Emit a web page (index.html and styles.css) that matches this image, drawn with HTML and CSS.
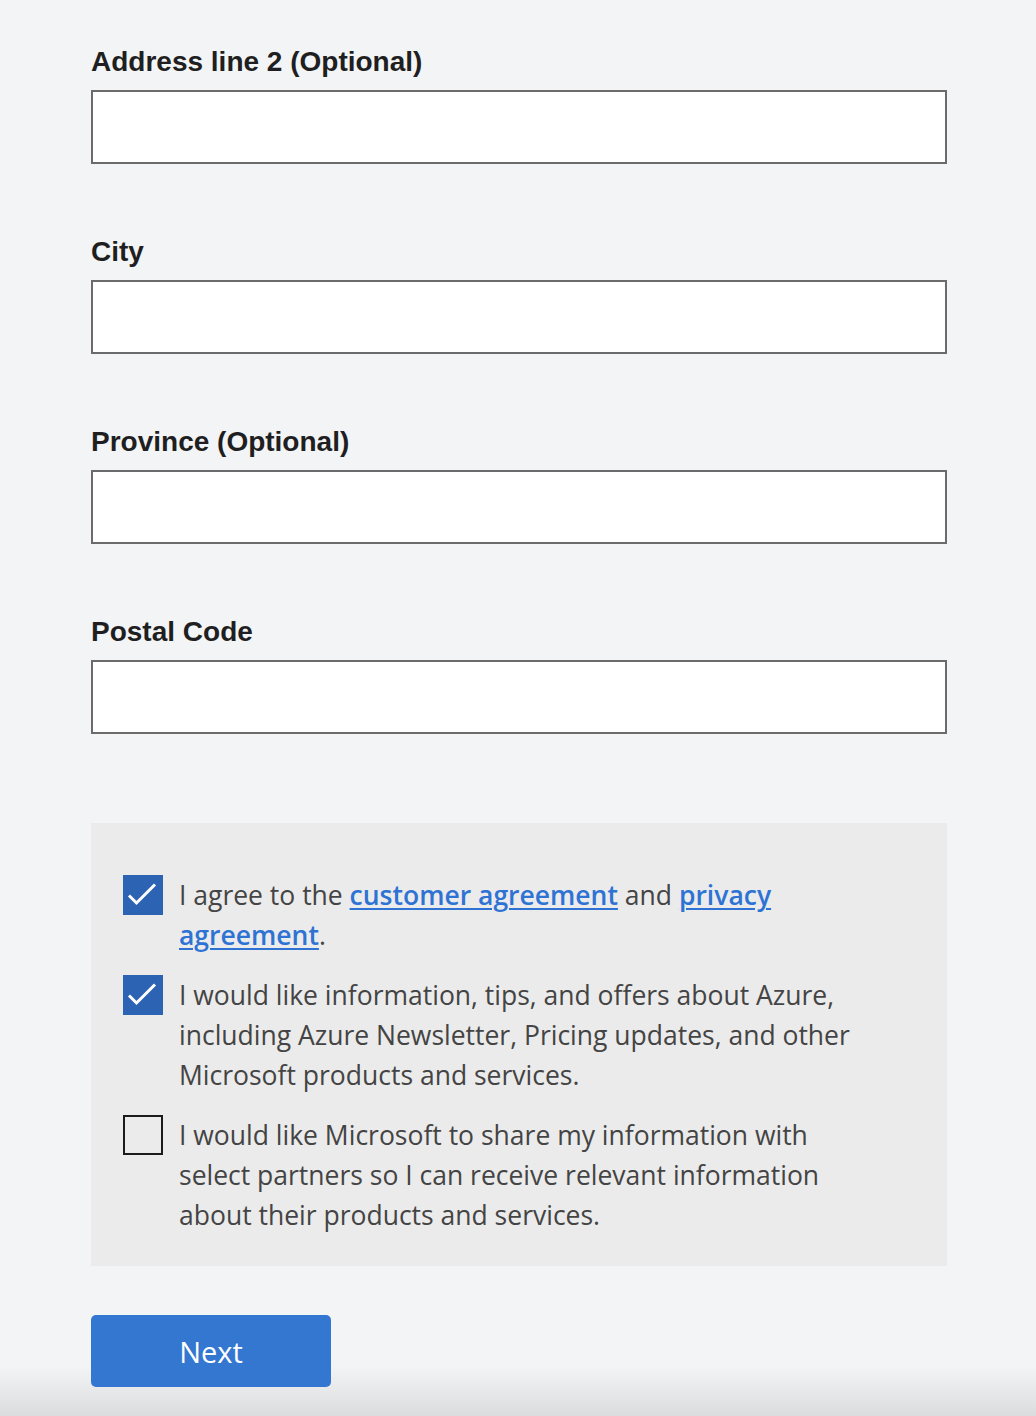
FILE: index.html
```html
<!DOCTYPE html>
<html lang="en">
<head>
<meta charset="utf-8">
<title>Address</title>
<link rel="stylesheet" href="styles.css">
</head>
<body>
<main class="form">
  <div class="field">
    <label class="label">Address line 2 (Optional)</label>
    <input class="input" type="text">
  </div>
  <div class="field">
    <label class="label">City</label>
    <input class="input" type="text">
  </div>
  <div class="field">
    <label class="label">Province (Optional)</label>
    <input class="input" type="text">
  </div>
  <div class="field">
    <label class="label">Postal Code</label>
    <input class="input" type="text">
  </div>

  <section class="agreements">
    <div class="check-row">
      <span class="box checked"><svg viewBox="0 0 40 40" width="40" height="40"><path d="M6 20.5 L13.5 28 L32 9.5" fill="none" stroke="#fff" stroke-width="3"/></svg></span>
      <p class="check-text">I agree to the <a href="#" class="link">customer agreement</a> and <a href="#" class="link">privacy agreement</a>.</p>
    </div>
    <div class="check-row">
      <span class="box checked"><svg viewBox="0 0 40 40" width="40" height="40"><path d="M6 20.5 L13.5 28 L32 9.5" fill="none" stroke="#fff" stroke-width="3"/></svg></span>
      <p class="check-text">I would like information, tips, and offers about Azure, including Azure Newsletter, Pricing updates, and other Microsoft products and services.</p>
    </div>
    <div class="check-row">
      <span class="box"></span>
      <p class="check-text">I would like Microsoft to share my information with select partners so I can receive relevant information about their products and services.</p>
    </div>
  </section>

  <button class="next" type="button">Next</button>
</main>
<div class="fade"></div>
</body>
</html>
```

FILE: styles.css
```css
html, body {
  margin: 0;
  padding: 0;
}
body {
  background: #f3f4f6;
  min-height: 1416px;
  position: relative;
  overflow: hidden;
}
.form {
  width: 856px;
  margin-left: 91px;
  padding-top: 45px;
  display: flex;
  flex-direction: column;
}
.field {
  display: flex;
  flex-direction: column;
  margin-bottom: 71px;
}
.field:last-of-type {
  margin-bottom: 0;
}
.label {
  font-family: "Liberation Sans", Arial, sans-serif;
  font-weight: 700;
  font-size: 28px;
  line-height: 34px;
  color: #1f1f22;
  margin-bottom: 11px;
}
.input {
  box-sizing: border-box;
  width: 856px;
  height: 74px;
  border: 2px solid #6b6b6b;
  background: #fff;
  margin: 0;
  padding: 0 12px;
}
.agreements {
  margin-top: 89px;
  background: #ebebeb;
  padding: 52px 32px 31px 32px;
  display: flex;
  flex-direction: column;
  gap: 20px;
}
.check-row {
  display: flex;
  align-items: flex-start;
  gap: 16px;
}
.box {
  box-sizing: border-box;
  flex: 0 0 40px;
  width: 40px;
  height: 40px;
  border: 2px solid #1b1b1b;
  background: transparent;
  display: block;
}
.box.checked {
  border: none;
  background: #2d63b3;
}
.box svg {
  display: block;
}
.check-text {
  margin: 0;
  font-family: "Open Sans", "Noto Sans", sans-serif;
  font-size: 26.5px;
  line-height: 40px;
  color: #444;
  max-width: 690px;
}
.link {
  color: #2e73d4;
  font-weight: 600;
  text-decoration: underline;
  text-decoration-thickness: 2px;
  text-underline-offset: 3px;
}
.next {
  position: relative;
  z-index: 1;
  margin-top: 49px;
  width: 240px;
  height: 72px;
  background: #3477d1;
  color: #fff;
  border: none;
  border-radius: 5px;
  font-family: "Open Sans", "Noto Sans", sans-serif;
  font-size: 29px;
  align-self: flex-start;
}
.fade {
  position: absolute;
  left: 0;
  right: 0;
  bottom: 0;
  height: 50px;
  background: linear-gradient(to bottom, rgba(200,200,203,0), rgba(200,200,203,0.55));
  pointer-events: none;
}
```
